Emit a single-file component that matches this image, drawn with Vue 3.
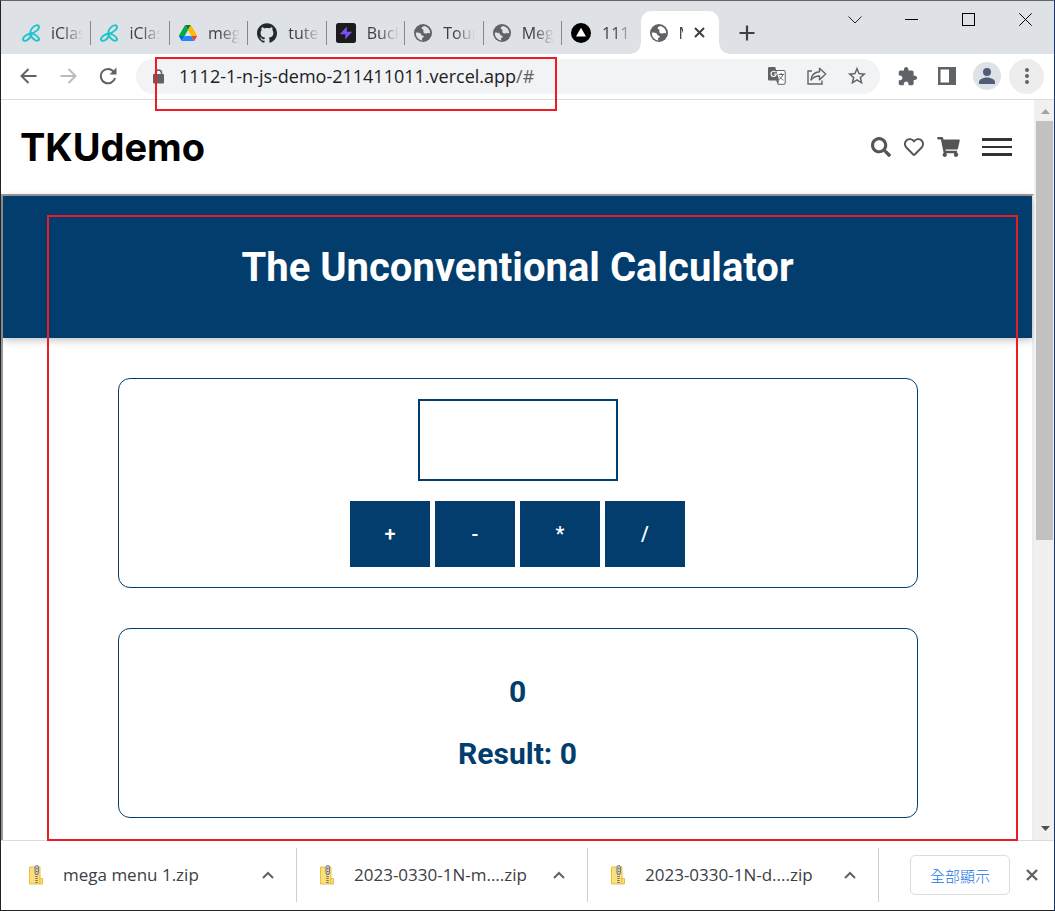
<script setup>
import { ref } from 'vue'

const tabs = [
  { icon: 'iclass', title: 'iClas' },
  { icon: 'iclass', title: 'iClas' },
  { icon: 'drive', title: 'meg' },
  { icon: 'github', title: 'tute' },
  { icon: 'bolt', title: 'Buck' },
  { icon: 'globe', title: 'Tour' },
  { icon: 'globe', title: 'Meg' },
  { icon: 'vercel', title: '111' },
  { icon: 'globe', title: 'M', active: true }
]

const downloads = ['mega menu 1.zip', '2023-0330-1N-m....zip', '2023-0330-1N-d....zip']

const operators = ['+', '-', '*', '/']
const entry = ref('')
const description = ref('0')
const result = ref(0)

function calculate(op) {
  const left = result.value
  const right = Number(entry.value) || 0
  description.value = `${left} ${op} ${right}`
  if (op === '+') result.value = left + right
  else if (op === '-') result.value = left - right
  else if (op === '*') result.value = left * right
  else result.value = left / right
}
</script>

<template>
  <div class="window">
    <header class="tabstrip">
      <div class="tabs" role="tablist">
        <div
          v-for="(tab, i) in tabs"
          :key="i"
          class="tab"
          :class="{ active: tab.active, last: i === tabs.length - 2 }"
          role="tab"
        >
          <svg v-if="tab.icon === 'iclass'" class="favicon" viewBox="0 0 20 20" fill="none" stroke="#1cc5cb" stroke-width="2.100">
            <path d="M9.600 10.800C8 7 13 1.500 17 1.300c2.600.4 2.400 3.200.4 5.200C15 8.600 12 10.500 9.600 10.800z" />
            <path d="M9.600 10.800C6 11 1.500 14 1 17c.2 2.200 3 2 5 .8C8.500 16 10.300 13.500 9.600 10.800z" />
            <path d="M9.600 10.800C12 10.300 17 12.500 19 16.500c.2 2-2 2.400-4 1.600C12.500 17 10 14 9.600 10.800z" />
          </svg>
          <svg v-else-if="tab.icon === 'drive'" class="favicon" viewBox="0 0 87.300 78">
            <path d="m6.600 66.850 3.850 6.650c.8 1.400 1.950 2.500 3.300 3.300l13.750-23.800h-27.500c0 1.550.4 3.100 1.200 4.500z" fill="#0066da" />
            <path d="m43.650 25-13.750-23.800c-1.350.8-2.500 1.900-3.300 3.300l-25.400 44a9.060 9.060 0 0 0 -1.200 4.500h27.500z" fill="#00ac47" />
            <path d="m73.550 76.800c1.350-.8 2.500-1.900 3.300-3.300l1.600-2.750 7.650-13.250c.8-1.400 1.200-2.950 1.200-4.500h-27.500l5.850 11.500z" fill="#ea4335" />
            <path d="m43.650 25 13.750-23.800c-1.350-.8-2.900-1.200-4.500-1.200h-18.500c-1.600 0-3.150.45-4.500 1.200z" fill="#00832d" />
            <path d="m59.800 53h-32.300l-13.750 23.800c1.350.8 2.900 1.200 4.500 1.200h50.800c1.600 0 3.150-.45 4.500-1.200z" fill="#2684fc" />
            <path d="m73.400 26.500-12.700-22c-.8-1.400-1.950-2.500-3.300-3.300l-13.750 23.800 16.150 28h27.450c0-1.550-.4-3.100-1.200-4.500z" fill="#ffba00" />
          </svg>
          <svg v-else-if="tab.icon === 'github'" class="favicon big" viewBox="0 0 24 24" fill="#24292f">
            <path d="M12 .297c-6.630 0-12 5.373-12 12 0 5.303 3.438 9.800 8.205 11.385.6.113.82-.258.82-.577 0-.285-.01-1.040-.015-2.040-3.338.724-4.042-1.610-4.042-1.610C4.422 18.070 3.633 17.700 3.633 17.700c-1.087-.744.084-.729.084-.729 1.205.084 1.838 1.236 1.838 1.236 1.070 1.835 2.809 1.305 3.495.998.108-.776.417-1.305.76-1.605-2.665-.3-5.466-1.332-5.466-5.930 0-1.310.465-2.380 1.235-3.220-.135-.303-.54-1.523.105-3.176 0 0 1.005-.322 3.300 1.230.96-.267 1.980-.399 3-.405 1.020.006 2.040.138 3 .405 2.280-1.552 3.285-1.230 3.285-1.230.645 1.653.24 2.873.12 3.176.765.84 1.230 1.910 1.230 3.220 0 4.610-2.805 5.625-5.475 5.920.42.36.81 1.096.81 2.220 0 1.606-.015 2.896-.015 3.286 0 .315.21.69.825.57C20.565 22.092 24 17.592 24 12.297c0-6.627-5.373-12-12-12" />
          </svg>
          <svg v-else-if="tab.icon === 'bolt'" class="favicon big" viewBox="0 0 20 20">
            <rect width="20" height="20" rx="2.500" fill="#1b1a1d" />
            <path d="M10.800 3.500v5.200h5.400L9.300 16.500v-5.200H3.800z" fill="#7b4ff0" />
          </svg>
          <svg v-else-if="tab.icon === 'vercel'" class="favicon big" viewBox="0 0 20 20">
            <circle cx="10" cy="10" r="10" fill="#000" />
            <path d="M10 4.800l5 8.700H5z" fill="#fff" />
          </svg>
          <svg v-else class="favicon" viewBox="0 0 18 18">
            <circle cx="9" cy="9" r="9" fill="#5f6368" />
            <path class="sea" d="M10.300 1.900c-1.700.5-3 1.300-2.600 2.600.4.900 1.500.5 1.700 1.500.3 1.100-.4 1.400 0 2.300.6 1.300 2.500 1.600 3.900 1 1.100-.5 1.800-.5 2.900.3A7.300 7.300 0 0 0 10.300 1.900z" />
            <path class="sea" d="M1.800 8.700c1.500-.2 3.300-.2 4.500.5 1.300.7.600 1.700 1.700 2.200 1.100.4 1.900.3 1.900 1.300-.1.900-1.700.8-1.900 1.800-.2.700.2 1.300.6 1.900C4.700 16.100 1.700 13 1.800 8.700z" />
          </svg>
          <span class="tab-title">{{ tab.title }}</span>
          <button v-if="tab.active" class="tab-close" aria-label="Close tab">
            <svg width="11" height="11" viewBox="0 0 11 11" stroke="#3c4043" stroke-width="2"><path d="M1 1l9 9M10 1l-9 9" /></svg>
          </button>
        </div>
      </div>
      <button class="new-tab" aria-label="New tab">
        <svg width="16" height="16" viewBox="0 0 16 16" stroke="#3c4043" stroke-width="2.200"><path d="M8 .5v15M.5 8h15" /></svg>
      </button>
      <div class="controls">
        <button aria-label="Search tabs"><svg width="14" height="8" viewBox="0 0 14 8" fill="none" stroke="#222"><path d="M.5 .5L7 7 13.500 .5" /></svg></button>
        <button aria-label="Minimize"><svg width="13" height="1" viewBox="0 0 13 1"><rect width="13" height="1" /></svg></button>
        <button aria-label="Maximize"><svg width="13" height="13" viewBox="0 0 13 13" fill="none" stroke="#000"><rect x=".5" y=".5" width="12" height="12" /></svg></button>
        <button aria-label="Close"><svg width="13" height="13" viewBox="0 0 13 13" stroke="#000"><path d="M.3 .3l12.400 12.400M12.700 .3L.3 12.700" /></svg></button>
      </div>
    </header>

    <div class="toolbar">
      <button class="tool" aria-label="Back">
        <svg width="17" height="16" viewBox="0 0 17 16" fill="none" stroke="#5f6368" stroke-width="2"><path d="M16.500 8H2M8.500 1L1.500 8l7 7" /></svg>
      </button>
      <button class="tool" aria-label="Forward">
        <svg width="17" height="16" viewBox="0 0 17 16" fill="none" stroke="#babcbe" stroke-width="2"><path d="M.5 8H15M8.500 1l7 7-7 7" /></svg>
      </button>
      <button class="tool" aria-label="Reload">
        <svg width="18" height="18" viewBox="0 0 18 18"><path d="M16 11A7.200 7.200 0 1 1 14.800 4.800" fill="none" stroke="#5f6368" stroke-width="2" /><path d="M17.500 .5v7h-7z" fill="#5f6368" /></svg>
      </button>
      <div class="omnibox">
        <svg class="lock" width="11" height="15" viewBox="0 0 11 15"><path d="M2.500 6V4a3 3 0 0 1 6 0v2" fill="none" stroke="#5f6368" stroke-width="1.500" /><rect y="5" width="11" height="9.500" rx="1" fill="#5f6368" /></svg>
        <p class="url">1112-1-n-js-demo-211411011.vercel.app<span>/#</span></p>
        <button class="tool" aria-label="Translate">
          <svg width="18" height="18" viewBox="0 0 18 18"><path d="M7.500 3.500H16a1.200 1.200 0 0 1 1.200 1.200v11.400a1.200 1.200 0 0 1-1.200 1.200H10L6 3.500z" fill="#fff" stroke="#5f6368" /><path d="M1.200 0h6l4 13.500h-10A1.200 1.200 0 0 1 0 12.300V1.200A1.200 1.200 0 0 1 1.200 0z" fill="#5f6368" /><path d="M7.600 5.200A2.600 2.600 0 1 0 8.200 7H5.800" fill="none" stroke="#fff" stroke-width="1.200" /><path d="M10.500 7.500H16M13.200 6v1.500M14.700 7.500c-.5 2.500-2 4-3.500 5M11.500 9.500c1 1.500 2.500 3 4 3.700" fill="none" stroke="#5f6368" /><path d="M8.500 13.500h2.700L10 17z" fill="#5f6368" /></svg>
        </button>
        <button class="tool" aria-label="Share">
          <svg width="20" height="18" viewBox="0 0 20 18" fill="none" stroke="#5f6368" stroke-width="1.400"><path d="M5 4H1v13h14v-3.500" /><path d="M4 13c.5-5 3.500-8 8.500-8.300V1.300L18.700 7l-6.200 5.700V9C9 9 6.300 10.200 4 13z" stroke-linejoin="round" /></svg>
        </button>
        <button class="tool" aria-label="Bookmark">
          <svg width="22" height="22" viewBox="0 0 24 24" fill="#5f6368"><path d="M22 9.240l-7.190-.62L12 2 9.190 8.630 2 9.240l5.460 4.730L5.820 21 12 17.270 18.180 21l-1.630-7.030L22 9.240zM12 15.400l-3.760 2.270 1-4.280-3.320-2.880 4.380-.38L12 6.100l1.710 4.040 4.380.38-3.320 2.880 1 4.280L12 15.400z" /></svg>
        </button>
      </div>
      <button class="tool" aria-label="Extensions">
        <svg width="21" height="21" viewBox="0 0 24 24" fill="#5f6368"><path d="M20.500 11H19V7c0-1.100-.9-2-2-2h-4V3.500C13 2.120 11.880 1 10.500 1S8 2.120 8 3.500V5H4c-1.100 0-1.990.9-1.990 2v3.800H3.500c1.490 0 2.700 1.210 2.700 2.700s-1.210 2.700-2.700 2.700H2V20c0 1.100.9 2 2 2h3.800v-1.500c0-1.490 1.210-2.700 2.700-2.700 1.490 0 2.700 1.210 2.700 2.700V22H17c1.100 0 2-.9 2-2v-4h1.500c1.380 0 2.500-1.120 2.500-2.500S21.880 11 20.500 11z" /></svg>
      </button>
      <button class="tool" aria-label="Side panel">
        <svg width="18" height="18" viewBox="0 0 18 18"><path d="M0 0h18v18H0zM2.500 2.500v13H11v-13z" fill="#5f6368" fill-rule="evenodd" /></svg>
      </button>
      <button class="tool" aria-label="Profile">
        <svg width="28" height="28" viewBox="0 0 28 28"><circle cx="14" cy="14" r="14" fill="#dee1e6" /><circle cx="14" cy="10" r="4" fill="#505d75" /><path d="M6 22v-2c0-3 5-4.500 8-4.500s8 1.500 8 4.500v2z" fill="#505d75" /></svg>
      </button>
      <button class="menu" aria-label="Menu">
        <svg width="4" height="16" viewBox="0 0 4 16" fill="#5f6368"><circle cx="2" cy="2" r="2" /><circle cx="2" cy="8" r="2" /><circle cx="2" cy="14" r="2" /></svg>
      </button>
      <div class="mark mark-url"></div>
    </div>

    <div class="viewport">
      <div class="page">
        <nav class="site-nav">
          <a class="brand" href="#">TKUdemo</a>
          <div class="site-icons">
            <a href="#" aria-label="Search"><svg width="20" height="20" viewBox="0 0 512 512"><path d="M505 442.700L405.300 343c-4.500-4.500-10.600-7-17-7H372c27.600-35.300 44-79.700 44-128C416 93.100 322.900 0 208 0S0 93.100 0 208s93.100 208 208 208c48.300 0 92.700-16.400 128-44v16.300c0 6.400 2.500 12.500 7 17l99.700 99.700c9.400 9.400 24.600 9.400 33.900 0l28.300-28.300c9.400-9.400 9.400-24.600.1-34zM208 336c-70.700 0-128-57.200-128-128 0-70.700 57.200-128 128-128 70.700 0 128 57.200 128 128 0 70.700-57.200 128-128 128z" /></svg></a>
            <a href="#" aria-label="Favourites"><svg width="20" height="20" viewBox="0 0 512 512"><path d="M458.400 64.300C400.600 15.700 311.300 23 256 79.300 200.700 23 111.400 15.600 53.600 64.300-21.600 127.600-10.600 230.800 43 285.500l175.400 178.700c10 10.200 23.400 15.900 37.600 15.900 14.300 0 27.600-5.600 37.600-15.800L469 285.600c53.500-54.700 64.700-157.900-10.600-221.300zm-23.600 187.500L259.400 430.500c-2.400 2.400-4.400 2.400-6.800 0L77.200 251.800c-36.500-37.200-43.900-107.600 7.300-150.700 38.900-32.700 98.900-27.800 136.500 10.500l35 35.700 35-35.700c37.800-38.500 97.800-43.200 136.500-10.600 51.100 43.100 43.500 113.900 7.300 150.800z" /></svg></a>
            <a href="#" aria-label="Cart"><svg width="23" height="20" viewBox="0 0 576 512"><path d="M528.120 301.319l47.273-208C578.806 78.301 567.391 64 551.990 64H159.208l-9.166-44.810C147.758 8.021 137.930 0 126.529 0H24C10.745 0 0 10.745 0 24v16c0 13.255 10.745 24 24 24h69.883l70.248 343.435C147.325 417.100 136 435.222 136 456c0 30.928 25.072 56 56 56s56-25.072 56-56c0-15.674-6.447-29.835-16.824-40h209.647C430.447 426.165 424 440.326 424 456c0 30.928 25.072 56 56 56s56-25.072 56-56c0-22.172-12.888-41.332-31.579-50.405l5.517-24.276c3.413-15.018-8.002-29.319-23.403-29.319H218.117l-6.545-32h293.145c11.206 0 20.920-7.754 23.403-18.681z" /></svg></a>
          </div>
          <button class="burger" aria-label="Open menu"><i></i><i></i><i></i></button>
        </nav>
        <main class="frame">
          <header class="hero"><h1>The Unconventional Calculator</h1></header>
          <section class="card calculator">
            <input v-model="entry" type="text" aria-label="Number" />
            <div class="ops">
              <button v-for="op in operators" :key="op" @click="calculate(op)">{{ op }}</button>
            </div>
          </section>
          <section class="card results">
            <h2>{{ description }}</h2>
            <h2>Result: {{ result }}</h2>
          </section>
        </main>
      </div>
      <div class="scrollbar">
        <svg viewBox="0 0 9 5" width="9" height="5"><path d="M0 5L4.500 0 9 5z" fill="#a3a3a3" /></svg>
        <div class="track"><div class="thumb"></div></div>
        <svg viewBox="0 0 9 5" width="9" height="5"><path d="M0 0L4.500 5 9 0z" fill="#505050" /></svg>
      </div>
      <div class="mark mark-page"></div>
    </div>

    <footer class="downloads">
      <div v-for="name in downloads" :key="name" class="download">
        <svg width="14" height="20" viewBox="0 0 14 20">
          <path d="M.5 2h10.500v17H.5z" fill="#fbdf7d" stroke="#e9bf3d" />
          <path d="M11 13.500h2.500V19H11z" fill="#fbdf7d" stroke="#e9bf3d" />
          <path d="M7.500 9v10" stroke="#77736a" stroke-width="2.500" stroke-dasharray="1 1" />
          <rect x="6" y=".5" width="3.500" height="9" rx="1.700" fill="#c9c9c9" stroke="#777" />
          <path d="M7.200 3.500h1.200M7.200 6.500h1.200" stroke="#555" />
        </svg>
        <span>{{ name }}</span>
        <button aria-label="Download options"><svg width="12" height="8" viewBox="0 0 12 8" fill="none" stroke="#5f6368" stroke-width="2"><path d="M1 7l5-5 5 5" /></svg></button>
      </div>
      <div class="spacer"></div>
      <button class="show-all">全部顯示</button>
      <button class="dismiss" aria-label="Close downloads"><svg width="12" height="12" viewBox="0 0 12 12" stroke="#5f6368" stroke-width="2.400"><path d="M1 1l10 10M11 1L1 11" /></svg></button>
    </footer>
  </div>
</template>

<style>
body {
  margin: 0;
}
</style>

<style scoped>
* {
  box-sizing: border-box;
}
button {
  padding: 0;
  border: 0;
  background: none;
  display: flex;
  align-items: center;
  justify-content: center;
  font: inherit;
  color: inherit;
}
svg {
  flex: none;
  display: block;
}
.window {
  min-height: 100vh;
  display: flex;
  flex-direction: column;
  border: 1px solid #222326;
  border-top-color: #636467;
  border-right-color: #1d3461;
  background: #fff;
  font-family: "Open Sans", "Noto Sans CJK TC", sans-serif;
  color: #3c4043;
}

/* Tab strip */
.tabstrip {
  display: flex;
  height: 53px;
  padding-left: 12px;
  background: #dee1e6;
}
.tabs {
  flex: 0 1 706px;
  display: grid;
  grid-template-columns: repeat(9, minmax(0, 1fr));
  padding-top: 10px;
}
.tab {
  position: relative;
  display: flex;
  align-items: center;
  gap: 11px;
  padding: 0 0 0 9px;
}
.tab::after {
  content: "";
  position: absolute;
  right: 0;
  top: 10px;
  width: 1px;
  height: 24px;
  background: #85888c;
}
.tab.last::after {
  display: none;
}
.favicon {
  width: 18px;
  height: 18px;
}
.favicon.big {
  width: 20px;
  height: 20px;
}
.favicon .sea {
  fill: #dee1e6;
}
.active .sea {
  fill: #fff;
}
.tab-title {
  white-space: nowrap;
  font-size: 16px;
  line-height: 24px;
  mask-image: linear-gradient(to right, #000 12px, transparent 32px);
}
.tab.active {
  background: #fff;
  border-radius: 10px 10px 0 0;
}
.tab.active::before,
.tab.active::after {
  content: "";
  display: block;
  position: absolute;
  top: auto;
  bottom: 0;
  width: 10px;
  height: 10px;
}
.tab.active::before {
  left: -10px;
  background: radial-gradient(circle at 0 0, #dee1e6 9px, #fff 10px);
}
.tab.active::after {
  right: -10px;
  background: radial-gradient(circle at 100% 0, #dee1e6 9px, #fff 10px);
}
.tab.active .tab-title {
  width: 4px;
  overflow: hidden;
}
.tab-close {
  flex: none;
}
.new-tab {
  width: 56px;
  margin-top: 10px;
}
.controls {
  margin-left: auto;
  display: flex;
  height: 37px;
}
.controls button {
  width: 57px;
}

/* Toolbar */
.toolbar {
  position: relative;
  display: flex;
  align-items: center;
  height: 46px;
  padding: 0 10px 1px 7px;
  border-bottom: 1px solid #dadce0;
}
.tool {
  flex: none;
  width: 40px;
  height: 36px;
}
.omnibox {
  flex: 1;
  min-width: 0;
  display: flex;
  align-items: center;
  height: 35px;
  margin: 0 7px 0 8px;
  padding: 0 3px 0 17px;
  border-radius: 18px;
  background: #f1f3f4;
}
.lock {
  margin-right: 15px;
}
.url {
  flex: 1;
  min-width: 0;
  margin: 0;
  overflow: hidden;
  white-space: nowrap;
  font-size: 18px;
  line-height: 28px;
  color: #202124;
}
.url span {
  color: #5f6368;
}
.menu {
  flex: none;
  width: 35px;
  height: 35px;
  margin-left: 2px;
  border-radius: 50%;
  background: #ededed;
}

/* Red outlines laid over the window */
.mark {
  position: absolute;
  z-index: 2;
  border: 2px solid #ed1c24;
  pointer-events: none;
}
.mark-url {
  left: 154px;
  top: 3px;
  width: 402px;
  height: 54px;
}
.mark-page {
  inset: 115px 36px -1px 46px;
}

/* Web page */
.viewport {
  position: relative;
  flex: 1;
  display: flex;
}
.page {
  flex: 1;
  min-width: 0;
  display: flex;
  flex-direction: column;
}
.site-nav {
  display: flex;
  align-items: center;
  height: 94px;
  padding: 0 22px 0 19px;
}
.brand {
  margin-right: auto;
  font-family: Inter, sans-serif;
  font-size: 38px;
  line-height: 48px;
  font-weight: 700;
  color: #000;
  text-decoration: none;
}
.site-icons {
  display: flex;
  gap: 13px;
  margin-right: 22px;
  fill: #555;
}
.burger {
  width: 30px;
  height: 18px;
  flex-direction: column;
  justify-content: space-between;
}
.burger i {
  width: 100%;
  height: 3px;
  background: #333;
}
.burger i:nth-child(2) {
  height: 2px;
}
.frame {
  flex: 1;
  border: 2px solid #9a9a9a;
  border-right-color: #eee;
  border-bottom: 0;
  padding-bottom: 22px;
  font-family: Roboto, sans-serif;
}
.hero {
  height: 142px;
  padding-top: 48px;
  background: #023d6d;
  color: #fff;
  text-align: center;
  box-shadow: 0 2px 8px rgba(0, 0, 0, 0.26);
}
.hero h1 {
  margin: 0;
  font-size: 40px;
  line-height: 48px;
  font-weight: 700;
}
.card {
  max-width: 800px;
  margin: 40px auto 0;
  border: 1px solid #023d6d;
  border-radius: 12px;
  color: #023d6d;
}
.calculator {
  display: flex;
  flex-direction: column;
  align-items: center;
  gap: 20px;
  padding: 20px;
}
.calculator input {
  width: 200px;
  height: 82px;
  padding: 8px;
  border: 2px solid #023d6d;
  border-radius: 0;
  background: #fff;
  font: 700 30px Roboto, sans-serif;
  color: #023d6d;
}
.ops {
  display: flex;
  gap: 5px;
}
.ops button {
  width: 80px;
  height: 66px;
  background: #023d6d;
  color: #fff;
  font-size: 20px;
  font-weight: 500;
}
.results {
  padding: 45px 20px;
  text-align: center;
}
.results h2 {
  margin: 0;
  font-size: 30px;
  line-height: 36px;
  font-weight: 700;
}
.results h2 + h2 {
  margin-top: 26px;
}

/* Scrollbar */
.scrollbar {
  width: 20px;
  padding: 9px 0 9px 2px;
  display: flex;
  flex-direction: column;
  align-items: center;
  gap: 7px;
  background: #f0f0f0;
}
.track {
  flex: 1;
  align-self: stretch;
  padding-right: 1px;
}
.thumb {
  height: 60%;
  background: #c1c1c1;
}

/* Downloads */
.downloads {
  display: flex;
  align-items: center;
  height: 70px;
  padding: 0 0 1px 5px;
  border-top: 1px solid #dadce0;
}
.download {
  flex: 0 1 291px;
  min-width: 0;
  display: flex;
  align-items: center;
  height: 54px;
  padding: 0 22px 0 23px;
  border-right: 1px solid #cfcfcf;
  font-size: 17px;
  line-height: 24px;
}
.download span {
  flex: 1;
  min-width: 0;
  margin-left: 20px;
  overflow: hidden;
  white-space: nowrap;
}
.spacer {
  flex: 1;
}
.show-all {
  width: 100px;
  height: 40px;
  border: 1px solid #dadce0;
  border-radius: 5px;
  font-family: "Noto Sans CJK TC", sans-serif;
  font-size: 15px;
  font-weight: 300;
  color: #1a73e8;
}
.dismiss {
  width: 44px;
  height: 40px;
}
</style>
